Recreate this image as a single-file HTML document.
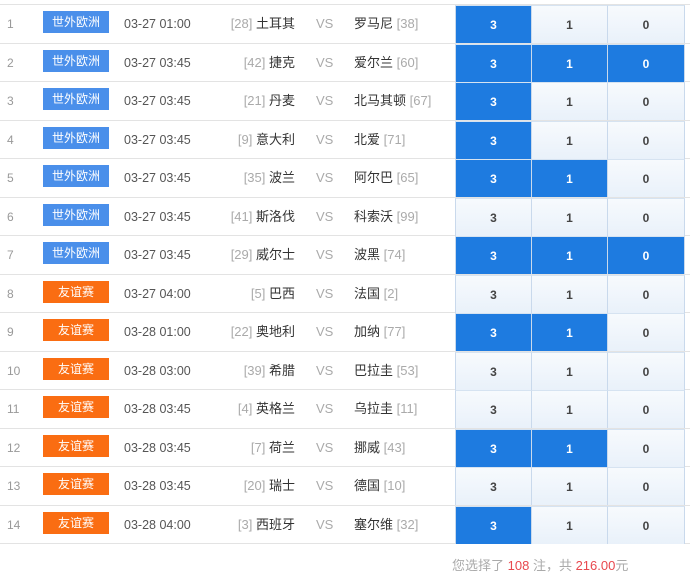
<!DOCTYPE html>
<html><head><meta charset="utf-8"><style>
*{margin:0;padding:0;box-sizing:border-box}
body{width:690px;height:575px;background:#fff;font-family:"Liberation Sans","Noto Sans CJK SC",sans-serif;position:relative;overflow:hidden;color:#333}
.row{position:absolute;left:0;width:690px;height:38.5px;border-bottom:1px solid #e3e3e3}
.row>div{position:absolute;top:0;height:38px;line-height:38px;font-size:13px;white-space:nowrap}
.n{left:7px;color:#999;font-size:12px!important}
.b{left:43px;top:6px!important;height:22px!important;line-height:22px!important;width:66px;text-align:center;color:#fff;font-size:12px!important}
.eu{background:#4a8fea}.fr{background:#fa6d12}
.t{left:124px;color:#555;font-size:12.5px!important}
.h{right:395px;text-align:right;color:#333}
.g{color:#aaa}
.vs{left:316px;color:#aaa}
.a{left:354px;color:#333}
.c{width:76px;text-align:center;font-weight:bold;font-size:12px!important;color:#444;background:linear-gradient(#f7fafd,#e9f1fa);border-left:1px solid #c9d9ec;border-top:1px solid #d6e3f1}
.c.s{background:#1e7be0;color:#fff}
.c1{left:455px}.c2{left:531px}.c3{left:607px;width:78px!important;border-right:1px solid #c9d9ec}
.foot{position:absolute;top:555px;left:452px;font-size:13px;color:#aaa}
.foot span{color:#e8484e}
</style></head><body>
<div style="position:absolute;top:4px;left:0;width:690px;border-top:1px solid #e3e3e3"></div>
<div id="w"></div>
<script>
var d=[["世外欧洲",1,"03-27 01:00","28","土耳其","罗马尼","38",[1,0,0]],
["世外欧洲",1,"03-27 03:45","42","捷克","爱尔兰","60",[1,1,1]],
["世外欧洲",1,"03-27 03:45","21","丹麦","北马其顿","67",[1,0,0]],
["世外欧洲",1,"03-27 03:45","9","意大利","北爱","71",[1,0,0]],
["世外欧洲",1,"03-27 03:45","35","波兰","阿尔巴","65",[1,1,0]],
["世外欧洲",1,"03-27 03:45","41","斯洛伐","科索沃","99",[0,0,0]],
["世外欧洲",1,"03-27 03:45","29","威尔士","波黑","74",[1,1,1]],
["友谊赛",0,"03-27 04:00","5","巴西","法国","2",[0,0,0]],
["友谊赛",0,"03-28 01:00","22","奥地利","加纳","77",[1,1,0]],
["友谊赛",0,"03-28 03:00","39","希腊","巴拉圭","53",[0,0,0]],
["友谊赛",0,"03-28 03:45","4","英格兰","乌拉圭","11",[0,0,0]],
["友谊赛",0,"03-28 03:45","7","荷兰","挪威","43",[1,1,0]],
["友谊赛",0,"03-28 03:45","20","瑞士","德国","10",[0,0,0]],
["友谊赛",0,"03-28 04:00","3","西班牙","塞尔维","32",[1,0,0]]];
var h="";d.forEach(function(r,i){var y=5+i*38.5;
h+='<div class="row" style="top:'+y+'px"><div class="n">'+(i+1)+'</div><div class="b '+(r[1]?'eu':'fr')+'">'+r[0]+'</div><div class="t">'+r[2]+'</div><div class="h"><span class="g">['+r[3]+']</span> '+r[4]+'</div><div class="vs">VS</div><div class="a">'+r[5]+' <span class="g">['+r[6]+']</span></div>';
["3","1","0"].forEach(function(v,k){h+='<div class="c c'+(k+1)+(r[7][k]?' s':'')+'">'+v+'</div>'});h+='</div>'});
document.getElementById("w").innerHTML=h;
</script>
<div class="foot">您选择了 <span>108</span> 注，共 <span>216.00</span>元</div>
</body></html>
